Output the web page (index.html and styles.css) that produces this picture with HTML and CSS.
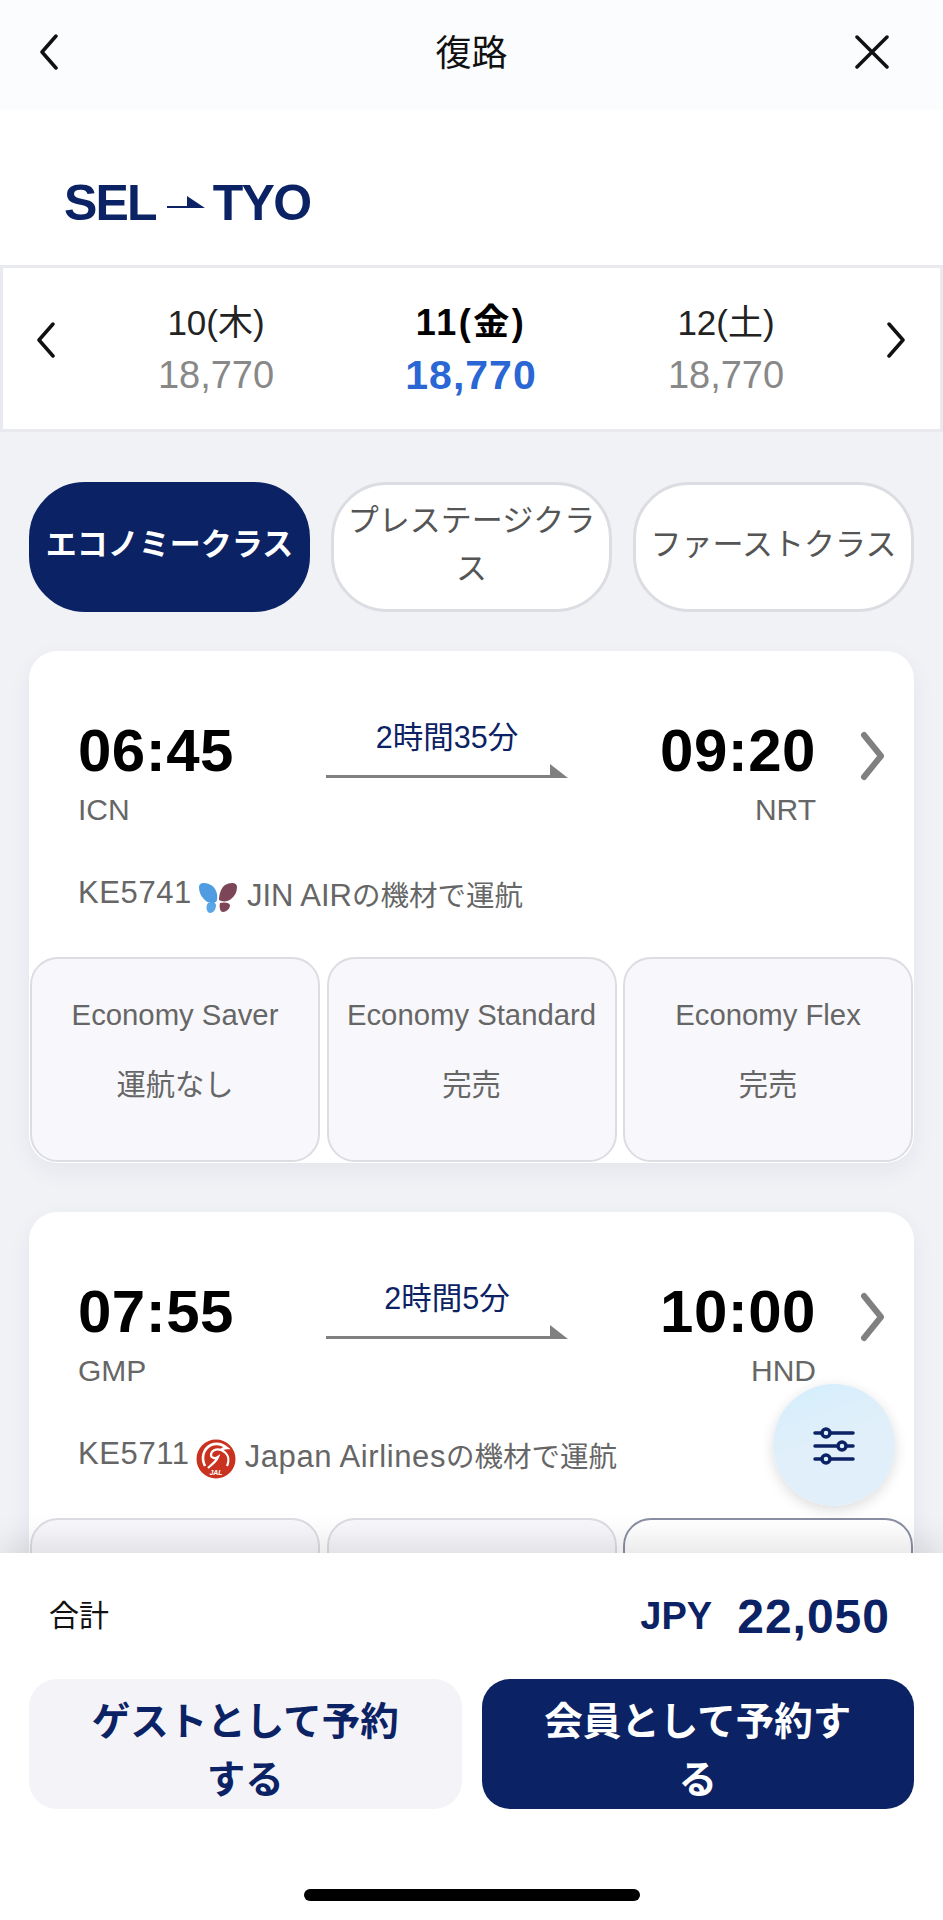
FILE: index.html
```html
<!DOCTYPE html>
<html lang="ja">
  <head>
    <meta charset="UTF-8" />
    <meta name="viewport" content="width=device-width, initial-scale=1.0" />
    <title>復路</title>
    <link rel="stylesheet" href="styles.css">
  </head>
  <body>
    <div class="page">
      <div class="content">
        <header class="topbar">
          <svg class="top-icon back-icon" viewBox="0 0 20 36"><path d="M17 2 L3 18 L17 34" /></svg>
          <h1>復路</h1>
          <svg class="top-icon close-icon" viewBox="0 0 34 34"><path d="M2 2 L32 32 M32 2 L2 32" /></svg>
        </header>

        <div class="route">
          <span>SEL</span>
          <svg class="route-arrow" viewBox="0 0 38 14"><path d="M0 10 H20 V0 L38 12 H0 Z" /></svg>
          <span>TYO</span>
        </div>

        <div class="dates">
          <svg class="date-arrow prev" viewBox="0 0 20 36"><path d="M17 2 L3 18 L17 34" /></svg>
          <div class="date-col">
            <div class="day">10(木)</div>
            <div class="price">18,770</div>
          </div>
          <div class="date-col active">
            <div class="day">11(金)</div>
            <div class="price">18,770</div>
          </div>
          <div class="date-col">
            <div class="day">12(土)</div>
            <div class="price">18,770</div>
          </div>
          <svg class="date-arrow next" viewBox="0 0 20 36"><path d="M3 2 L17 18 L3 34" /></svg>
        </div>

        <div class="list">
          <div class="tabs">
            <div class="tab selected">エコノミークラス</div>
            <div class="tab">プレステージクラス</div>
            <div class="tab">ファーストクラス</div>
          </div>

          <div class="card">
            <div class="times">
              <div class="point">
                <div class="time">06:45</div>
                <div class="code">ICN</div>
              </div>
              <div class="middle">
                <div class="duration">2時間35分</div>
                <svg class="line" viewBox="0 0 242 14"><path d="M0 11 H224 V0 L242 14 H0 Z" /></svg>
              </div>
              <div class="point right">
                <div class="time">09:20</div>
                <div class="code">NRT</div>
              </div>
              <svg class="more" viewBox="0 0 25 50"><path d="M4 4 L21 25 L4 46" /></svg>
            </div>
            <div class="flight">
              <span class="flight-no">KE5741</span>
              <svg class="carrier" viewBox="0 0 40 40">
                <path d="M1 9 C1 4 8 4 13 7 C18 10 20 16 19 22 C18 26 12 26 8 23 C3 19 1 14 1 9 Z" fill="#4f9de0" />
                <path d="M10 25 C14 24 18 24 18 27 C18 32 15 35 12 35 C9 35 7 29 10 25 Z" fill="#5aa6e6" />
                <path d="M39 9 C39 4 32 4 27 7 C23 10 21 16 21 22 C24 24 30 24 33 21 C37 18 39 14 39 9 Z" fill="#7c4658" />
                <path d="M22 25 C25 24 31 24 32 27 C32 31 28 34 25 34 C22 34 21 29 22 25 Z" fill="#7c4658" />
              </svg>
              <span>JIN AIR<span class="jp">の機材で運航</span></span>
            </div>
            <div class="fares">
              <div class="fare">
                <div>Economy Saver</div>
                <div>運航なし</div>
              </div>
              <div class="fare">
                <div>Economy Standard</div>
                <div>完売</div>
              </div>
              <div class="fare">
                <div>Economy Flex</div>
                <div>完売</div>
              </div>
            </div>
          </div>

          <div class="card">
            <div class="times">
              <div class="point">
                <div class="time">07:55</div>
                <div class="code">GMP</div>
              </div>
              <div class="middle">
                <div class="duration">2時間5分</div>
                <svg class="line" viewBox="0 0 242 14"><path d="M0 11 H224 V0 L242 14 H0 Z" /></svg>
              </div>
              <div class="point right">
                <div class="time">10:00</div>
                <div class="code">HND</div>
              </div>
              <svg class="more" viewBox="0 0 25 50"><path d="M4 4 L21 25 L4 46" /></svg>
            </div>
            <div class="flight">
              <span class="flight-no">KE5711</span>
              <svg class="carrier" viewBox="0 0 40 40">
                <circle cx="20" cy="20" r="19.5" fill="#c8321f" />
                <path d="M9 27 C5 19 7 10 15 6 C20 4 26 5 31 9 C28 9 26 10 25 11" fill="none" stroke="#fff" stroke-width="2.6" />
                <path d="M31 27 C34 20 32 14 25 11 C20 9 15 12 15 16 C15 19 19 20 22 18 C20 23 15 26 12 29" fill="none" stroke="#fff" stroke-width="2.2" />
                <text class="jal-mark" x="20" y="36" text-anchor="middle">JAL</text>
              </svg>
              <span class="airline-wide">Japan Airlines<span class="jp">の機材で運航</span></span>
            </div>
            <div class="fares">
              <div class="fare"></div>
              <div class="fare"></div>
              <div class="fare chosen"></div>
            </div>
          </div>
        </div>
      </div>

      <button class="filter" type="button">
        <svg viewBox="0 0 38 30">
          <path d="M0 3 H38 M0 16 H38 M0 29 H38" />
          <circle cx="11" cy="3" r="4" />
          <circle cx="27" cy="16" r="4" />
          <circle cx="11" cy="29" r="4" />
        </svg>
      </button>

      <footer class="summary">
        <div class="total">
          <span class="total-label">合計</span>
          <span class="total-price"><span class="currency">JPY</span><span>22,050</span></span>
        </div>
        <div class="actions">
          <button class="action guest" type="button">ゲストとして予約する</button>
          <button class="action member" type="button">会員として予約する</button>
        </div>
        <div class="home-bar"></div>
      </footer>
    </div>
  </body>
</html>
```

FILE: styles.css
```css
* {
  box-sizing: border-box;
}
body {
  margin: 0;
  font-family: "Liberation Sans", "Noto Sans CJK JP", sans-serif;
  background-color: #f1f2f6;
}
.page {
  position: relative;
  width: 943px;
  height: 1920px;
  display: flex;
  flex-direction: column;
  overflow: hidden;
}
.content {
  flex: 1;
  min-height: 0;
  overflow: hidden;
}
.topbar {
  height: 110px;
  padding: 0 54px 6px;
  display: grid;
  grid-template-columns: 1fr auto 1fr;
  align-items: center;
  background-color: #fbfcfe;
}
.topbar h1 {
  margin: 0 0 5px;
  font-size: 36px;
  font-weight: 400;
  color: #111;
}
.top-icon {
  width: 20px;
  height: 36px;
  fill: none;
  stroke: #111;
  stroke-width: 3.5;
  stroke-linecap: round;
  stroke-linejoin: round;
}
.back-icon {
  margin-left: -15px;
}
.close-icon {
  width: 34px;
  height: 34px;
  justify-self: end;
}
.route {
  height: 155px;
  padding: 30px 0 0 64px;
  display: flex;
  align-items: center;
  background-color: #fff;
  color: #0b2265;
  font-size: 50px;
  font-weight: 700;
  letter-spacing: -1.8px;
}
.route-arrow {
  width: 38px;
  height: 14px;
  margin: 0 8px 0 11px;
  fill: #0b2265;
}
.dates {
  height: 167px;
  padding: 0 34px 0 33px;
  display: flex;
  align-items: center;
  background-color: #fff;
  border: 3px solid #e9eaf0;
}
.date-arrow {
  flex: none;
  width: 20px;
  height: 36px;
  margin-bottom: 18px;
  fill: none;
  stroke: #111;
  stroke-width: 3.5;
  stroke-linecap: round;
  stroke-linejoin: round;
}
.date-arrow.prev {
  margin-right: auto;
}
.date-arrow.next {
  margin-left: auto;
}
.date-col {
  width: 255px;
  text-align: center;
}
.day {
  font-size: 35px;
  line-height: 53px;
  color: #222;
}
.price {
  font-size: 38px;
  line-height: 53px;
  color: #888;
}
.date-col.active .day {
  font-size: 36px;
  font-weight: 700;
  letter-spacing: 2.5px;
  color: #000;
}
.date-col.active .price {
  font-size: 41px;
  font-weight: 700;
  letter-spacing: 1px;
  color: #2a66d4;
}
.list {
  padding: 50px 29px 0;
}
.tabs {
  display: grid;
  grid-template-columns: repeat(3, 1fr);
  gap: 21px;
}
.tab {
  height: 130px;
  padding: 0 8px 4px;
  display: flex;
  align-items: center;
  justify-content: center;
  text-align: center;
  background-color: #fff;
  border: 3px solid #dcdde2;
  border-radius: 56px;
  color: #555;
  font-size: 31px;
  line-height: 48px;
}
.tab.selected {
  background-color: #0b2265;
  border-color: #0b2265;
  color: #fff;
  font-weight: 700;
}
.card {
  height: 512px;
  margin-top: 39px;
  background-color: #fff;
  border-radius: 28px;
  box-shadow: 0 8px 24px rgba(30, 40, 80, 0.06);
}
.card + .card {
  margin-top: 49px;
}
.times {
  padding: 66px 0 0 49px;
  display: flex;
  align-items: flex-start;
}
.point {
  width: 248px;
  padding-top: 4px;
}
.point.right {
  text-align: right;
}
.time {
  font-size: 60px;
  line-height: 60px;
  font-weight: 700;
  letter-spacing: 0.5px;
  color: #000;
}
.code {
  margin-top: 9px;
  font-size: 30px;
  line-height: 40px;
  color: #666;
}
.middle {
  width: 242px;
  text-align: center;
}
.duration {
  font-size: 30.5px;
  line-height: 40px;
  color: #0b2265;
}
.line {
  display: block;
  width: 242px;
  height: 14px;
  margin-top: 7px;
  fill: #808080;
}
.more {
  width: 25px;
  height: 50px;
  margin: 14px 0 0 44px;
  fill: none;
  stroke: #808080;
  stroke-width: 6;
  stroke-linecap: round;
  stroke-linejoin: round;
}
.flight {
  margin-top: 45px;
  padding: 0 0 4px 49px;
  height: 40px;
  display: flex;
  align-items: center;
  font-size: 31px;
  color: #666;
}
.flight .jp {
  font-size: 28.5px;
  letter-spacing: 0;
}
.flight-no,
.airline-wide {
  letter-spacing: 0.6px;
}
.carrier {
  flex: none;
  width: 40px;
  height: 40px;
  margin: 10px 9px 0 6px;
}
.jal-mark {
  font-size: 7px;
  font-weight: 700;
  font-style: italic;
  fill: #fff;
  letter-spacing: 0;
}
.fares {
  margin-top: 42px;
  padding: 0 1px;
  display: grid;
  grid-template-columns: repeat(3, 1fr);
  gap: 6.5px;
}
.fare {
  height: 205px;
  padding-top: 36px;
  display: flex;
  flex-direction: column;
  gap: 30px;
  text-align: center;
  background-color: #f8f8fc;
  border: 2px solid #dcdde2;
  border-radius: 28px;
  color: #666;
  font-size: 29.3px;
  line-height: 40px;
}
.fare.chosen {
  background-color: #fff;
  border-color: #8a8fa3;
}
.filter {
  position: absolute;
  left: 773px;
  top: 1384px;
  width: 122px;
  height: 122px;
  padding: 0;
  display: flex;
  align-items: center;
  justify-content: center;
  border: none;
  border-radius: 50%;
  background: linear-gradient(160deg, #d3eefd, #e0eff9 45%);
  box-shadow: 0 4px 14px rgba(0, 0, 0, 0.14);
}
.filter svg {
  width: 38px;
  height: 34px;
  overflow: visible;
  stroke: #0b2265;
  stroke-width: 3.5;
  stroke-linecap: round;
}
.filter circle {
  fill: #dff0fa;
}
.summary {
  position: relative;
  flex: none;
  height: 367px;
  background-color: #fff;
  box-shadow: 0 -12px 30px rgba(0, 0, 0, 0.1);
}
.total {
  height: 126px;
  padding: 0 53px 6px 49px;
  display: flex;
  justify-content: space-between;
  align-items: center;
}
.total-label {
  font-size: 30px;
  color: #111;
}
.total-price {
  display: flex;
  align-items: center;
  gap: 25px;
  margin-top: 6px;
  color: #0b2265;
  font-weight: 700;
  font-size: 48px;
  letter-spacing: 1px;
}
.currency {
  font-size: 38px;
  letter-spacing: 0;
}
.actions {
  padding: 0 29px;
  display: grid;
  grid-template-columns: 1fr 1fr;
  gap: 20px;
}
.action {
  height: 130px;
  padding: 14px 50px 0;
  border: none;
  border-radius: 28px;
  font-family: inherit;
  font-size: 38.5px;
  font-weight: 700;
  line-height: 58px;
}
.action.guest {
  background-color: #f3f3f8;
  color: #0b2265;
}
.action.member {
  background-color: #0b2265;
  color: #fff;
}
.home-bar {
  width: 336px;
  height: 12px;
  margin: 80px auto 0;
  background-color: #000;
  border-radius: 6px;
}
```
